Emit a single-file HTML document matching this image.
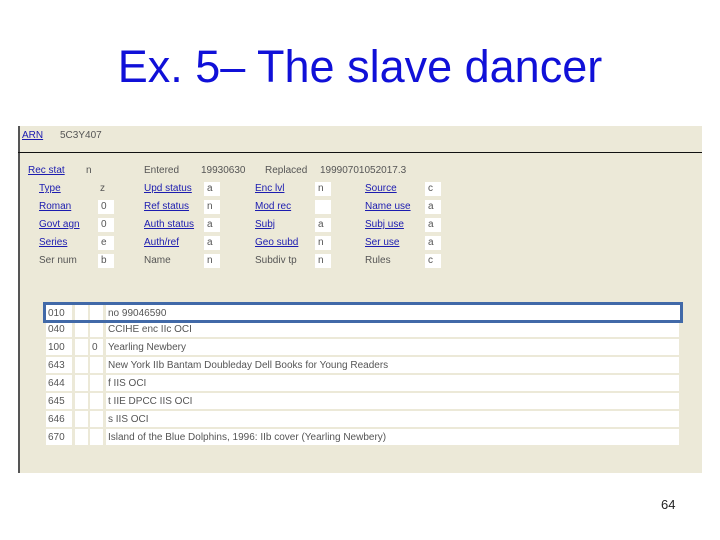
<!DOCTYPE html>
<html><head><meta charset="utf-8"><style>
*{margin:0;padding:0;box-sizing:border-box}
body{width:720px;height:540px;background:#fff;position:relative;overflow:hidden;font-family:"Liberation Sans",sans-serif}
.t{position:absolute;left:0;width:720px;top:39px;text-align:center;font-size:45px;color:#1010d8;line-height:56px}
.p{position:absolute;left:18px;top:126px;width:684px;height:347px;background:#ece9d8}
.lb{position:absolute;left:18px;top:126px;width:2px;height:347px;background:#555}
.sep{position:absolute;left:18px;top:152px;width:684px;height:1px;background:#111}
.a{position:absolute;font-size:10px;color:#555;line-height:12px;white-space:nowrap}
.l{color:#1c1cb0;text-decoration:underline}
.v{position:absolute;width:16px;height:14px;background:#fff;font-size:10px;color:#555;line-height:14px;padding-left:3px}
.r{position:absolute;height:16px;background:#fff;font-size:10px;color:#555;line-height:17px;padding-left:2px;white-space:nowrap}
.box{position:absolute;left:43px;top:302px;width:640px;height:21px;border:3px solid #4169a8}
.n{position:absolute;left:661px;top:497px;font-size:13px;color:#222}
</style></head><body>
<div class="t">Ex. 5– The slave dancer</div>
<div class="p"></div><div class="lb"></div><div class="sep"></div>
<div class="a l" style="left:22px;top:130px">ARN</div>
<div class="a" style="left:60px;top:130px">5C3Y407</div>
<div class="a l" style="left:28px;top:165px">Rec stat</div>
<div class="a" style="left:86px;top:165px">n</div>
<div class="a" style="left:144px;top:165px">Entered</div>
<div class="a" style="left:201px;top:165px">19930630</div>
<div class="a" style="left:265px;top:165px">Replaced</div>
<div class="a" style="left:320px;top:165px">19990701052017.3</div>

<div class="a l" style="left:39px;top:183px">Type</div><div class="a" style="left:100px;top:183px">z</div>
<div class="a l" style="left:39px;top:201px">Roman</div><div class="v" style="left:98px;top:200px">0</div>
<div class="a l" style="left:39px;top:219px">Govt agn</div><div class="v" style="left:98px;top:218px">0</div>
<div class="a l" style="left:39px;top:237px">Series</div><div class="v" style="left:98px;top:236px">e</div>
<div class="a" style="left:39px;top:255px">Ser num</div><div class="v" style="left:98px;top:254px">b</div>

<div class="a l" style="left:144px;top:183px">Upd status</div><div class="v" style="left:204px;top:182px">a</div>
<div class="a l" style="left:144px;top:201px">Ref status</div><div class="v" style="left:204px;top:200px">n</div>
<div class="a l" style="left:144px;top:219px">Auth status</div><div class="v" style="left:204px;top:218px">a</div>
<div class="a l" style="left:144px;top:237px">Auth/ref</div><div class="v" style="left:204px;top:236px">a</div>
<div class="a" style="left:144px;top:255px">Name</div><div class="v" style="left:204px;top:254px">n</div>

<div class="a l" style="left:255px;top:183px">Enc lvl</div><div class="v" style="left:315px;top:182px">n</div>
<div class="a l" style="left:255px;top:201px">Mod rec</div><div class="v" style="left:315px;top:200px"></div>
<div class="a l" style="left:255px;top:219px">Subj</div><div class="v" style="left:315px;top:218px">a</div>
<div class="a l" style="left:255px;top:237px">Geo subd</div><div class="v" style="left:315px;top:236px">n</div>
<div class="a" style="left:255px;top:255px">Subdiv tp</div><div class="v" style="left:315px;top:254px">n</div>

<div class="a l" style="left:365px;top:183px">Source</div><div class="v" style="left:425px;top:182px">c</div>
<div class="a l" style="left:365px;top:201px">Name use</div><div class="v" style="left:425px;top:200px">a</div>
<div class="a l" style="left:365px;top:219px">Subj use</div><div class="v" style="left:425px;top:218px">a</div>
<div class="a l" style="left:365px;top:237px">Ser use</div><div class="v" style="left:425px;top:236px">a</div>
<div class="a" style="left:365px;top:255px">Rules</div><div class="v" style="left:425px;top:254px">c</div>

<div class="r" style="left:46px;top:305px;width:26px;">010</div>
<div class="r" style="left:75px;top:305px;width:13px"></div>
<div class="r" style="left:90px;top:305px;width:13px"></div>
<div class="r" style="left:106px;top:305px;width:574px">no 99046590</div>

<div class="r" style="left:46px;top:321px;width:26px">040</div><div class="r" style="left:75px;top:321px;width:13px"></div><div class="r" style="left:90px;top:321px;width:13px"></div><div class="r" style="left:106px;top:321px;width:573px">CCIHE enc IIc OCI</div>
<div class="r" style="left:46px;top:339px;width:26px">100</div><div class="r" style="left:75px;top:339px;width:13px"></div><div class="r" style="left:90px;top:339px;width:13px">0</div><div class="r" style="left:106px;top:339px;width:573px">Yearling Newbery</div>
<div class="r" style="left:46px;top:357px;width:26px">643</div><div class="r" style="left:75px;top:357px;width:13px"></div><div class="r" style="left:90px;top:357px;width:13px"></div><div class="r" style="left:106px;top:357px;width:573px">New York IIb Bantam Doubleday Dell Books for Young Readers</div>
<div class="r" style="left:46px;top:375px;width:26px">644</div><div class="r" style="left:75px;top:375px;width:13px"></div><div class="r" style="left:90px;top:375px;width:13px"></div><div class="r" style="left:106px;top:375px;width:573px">f IIS OCI</div>
<div class="r" style="left:46px;top:393px;width:26px">645</div><div class="r" style="left:75px;top:393px;width:13px"></div><div class="r" style="left:90px;top:393px;width:13px"></div><div class="r" style="left:106px;top:393px;width:573px">t IIE DPCC IIS OCI</div>
<div class="r" style="left:46px;top:411px;width:26px">646</div><div class="r" style="left:75px;top:411px;width:13px"></div><div class="r" style="left:90px;top:411px;width:13px"></div><div class="r" style="left:106px;top:411px;width:573px">s IIS OCI</div>
<div class="r" style="left:46px;top:429px;width:26px">670</div><div class="r" style="left:75px;top:429px;width:13px"></div><div class="r" style="left:90px;top:429px;width:13px"></div><div class="r" style="left:106px;top:429px;width:573px">Island of the Blue Dolphins, 1996: IIb cover (Yearling Newbery)</div>
<div class="box"></div>
<div class="n">64</div>
</body></html>
